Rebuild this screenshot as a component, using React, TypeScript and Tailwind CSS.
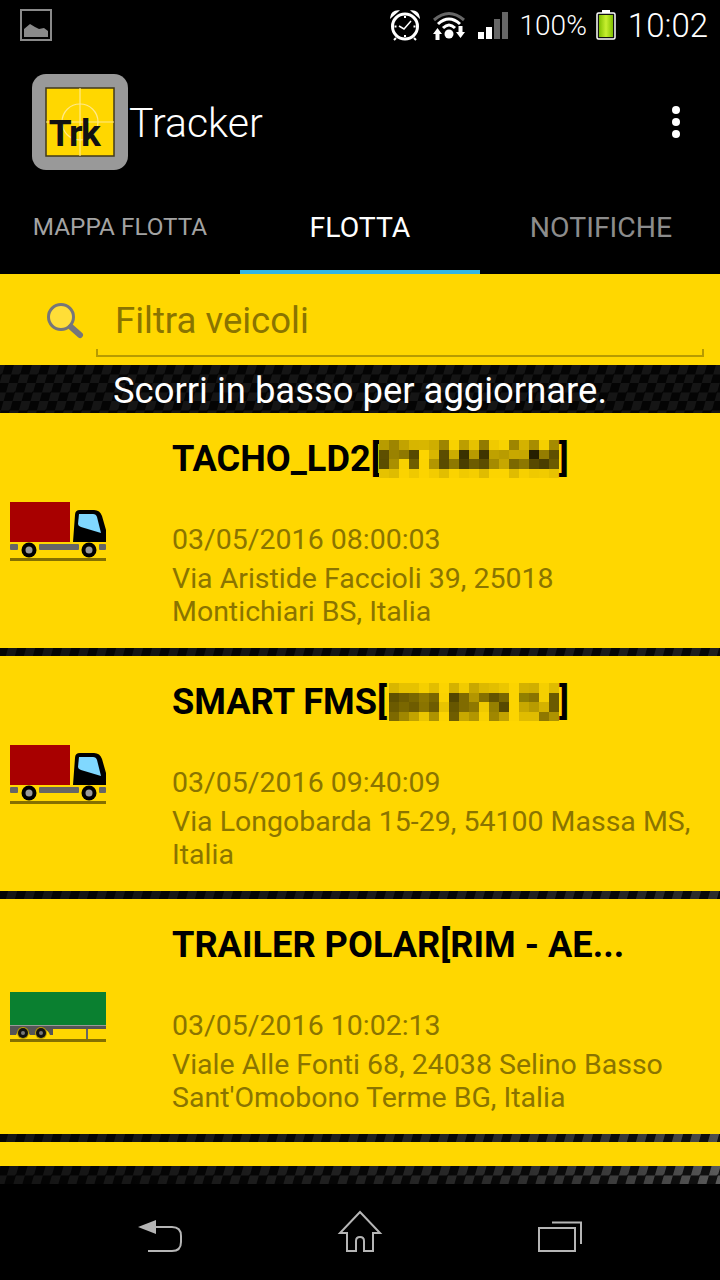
import type { ReactNode } from "react";

const ROBOTO = "font-['Roboto',sans-serif]";

const MOSAIC_A = [
  ["b89c00", "9e8500", "c2a300", "d7b500", "d8b600", "cfae00", "9e8500", "f8d200", "bc9e00", "e6c200", "927b00", "f0ca00", "f8d200", "9e8500", "d4b200", "a88d00", "f5cf00", "a58b00"],
  ["5e4f00", "9a8200", "8f7800", "574900", "fdd500", "d9b600", "5c4d00", "ccac00", "3a3100", "b89b00", "3f3500", "bfa100", "b99c00", "c8a800", "c6a700", "251f00", "957d00", "5f5000"],
  ["5b4d00", "aa8f00", "f8d100", "6f5d00", "fcd400", "b39600", "5a4c00", "8e7800", "4a3e00", "6d5c00", "5c4d00", "a58b00", "c7a700", "7b6800", "8d7700", "574900", "4a3e00", "6b5a00"],
  ["e6c200", "dfbc00", "fbd300", "efc900", "fcd400", "f3cc00", "e2be00", "fbd300", "f0ca00", "f5ce00", "e0bc00", "fcd400", "fcd400", "e0bc00", "f7d000", "efc900", "f1cb00", "e8c300"],
];

const MOSAIC_B = [
  ["d8b600", "e6c200", "e6c200", "f5cf00", "e2be00", "fcd400", "d4b200", "f1cb00", "c8a800", "dcb900", "e2be00", "ebc600", "fcd400", "d4b200", "d0af00", "f5cf00", "e0bc00"],
  ["5f5000", "6e5c00", "7a6700", "8f7800", "7a6700", "fad200", "534600", "806b00", "b39600", "857000", "645400", "7a6700", "fcd400", "918000", "8a7400", "f5cf00", "6b5a00"],
  ["6b5a00", "7a6700", "6e5c00", "8a7400", "6e5c00", "e8c300", "665600", "806b00", "8f7800", "f0ca00", "968000", "574900", "fcd400", "c8a800", "b89b00", "d4b200", "6b5a00"],
  ["7d6900", "a08700", "c2a300", "ebc600", "ae9300", "fcd400", "6f5d00", "c8a800", "b39600", "f8d100", "a08700", "c2a300", "fcd400", "e0bc00", "e0bc00", "8f7800", "ae9300"],
];

// Slanted carbon-fibre weave; `glow` brightens the weave towards the right edge.
function Carbon({ className = "", glow = "", children }: { className?: string; glow?: string; children?: ReactNode }) {
  return (
    <div className={`relative isolate shrink-0 overflow-hidden bg-black ${className}`}>
      <div className="absolute inset-y-0 -left-[20px] -right-[20px] skew-x-[-16deg] bg-[conic-gradient(#151515_25%,#040404_0_50%,#151515_0_75%,#040404_0)] bg-[length:18px_18px]" />
      {glow && <div className={`absolute inset-0 mix-blend-color-dodge ${glow}`} />}
      {children}
    </div>
  );
}

function Mosaic({ cells }: { cells: string[][] }) {
  const cols = cells[0].length;
  return (
    <svg width={cols * 10} height={38} viewBox={`0 0 ${cols * 10} 38`} className="block shrink-0" shapeRendering="crispEdges">
      {cells.flatMap((row, r) =>
        row.map((c, i) => <rect key={`${r}-${i}`} x={i * 10} y={r * 9.5} width={10} height={9.5} fill={`#${c}`} />),
      )}
    </svg>
  );
}

function Truck() {
  return (
    <svg width="96" height="60" viewBox="0 0 96 60" className="block">
      <rect x="0" y="0" width="60" height="40" fill="#a80000" />
      <path d="M63 40 L65 13 Q65 8 70 8 L84 8 Q90 8 92 14 L96 28 L96 40 Z" fill="#000" />
      <path d="M69 12 L83 12 Q86 12 87 15 L91 31 L71 25 Q68 24 68 22 Z" fill="#80d8ff" />
      <rect x="0" y="42" width="8" height="6" rx="1" fill="#666" />
      <rect x="29" y="42" width="40" height="6" rx="1" fill="#666" />
      <rect x="89" y="42" width="7" height="6" rx="1" fill="#666" />
      <circle cx="19" cy="48" r="7.5" fill="#000" />
      <circle cx="19" cy="48" r="3.5" fill="#999" />
      <circle cx="79" cy="48" r="7.5" fill="#000" />
      <circle cx="79" cy="48" r="3.5" fill="#999" />
      <rect x="0" y="56" width="96" height="3" fill="#857000" />
    </svg>
  );
}

function Trailer() {
  return (
    <svg width="96" height="50" viewBox="0 0 96 50" className="block">
      <rect x="0" y="0" width="96" height="33" fill="#0a8030" />
      <rect x="0" y="33" width="96" height="1" fill="#999" />
      <rect x="0" y="34" width="96" height="3" fill="#555" />
      <path d="M0 37 H43 V43 H40 Q38 38 35 38 H31 Q28 43 26 43 H20 Q17 38 12 38 Q8 38 6 43 H0 Z" fill="#555" />
      <circle cx="13" cy="41" r="6" fill="#b89b00" />
      <circle cx="13" cy="41" r="5" fill="#111" />
      <circle cx="13" cy="41" r="2" fill="#777" />
      <circle cx="31" cy="41" r="6" fill="#b89b00" />
      <circle cx="31" cy="41" r="5" fill="#111" />
      <circle cx="31" cy="41" r="2" fill="#777" />
      <rect x="76" y="37" width="2" height="10" fill="#666" />
      <rect x="0" y="47" width="96" height="3" fill="#857000" />
    </svg>
  );
}

function Logo() {
  return (
    <svg width="96" height="96" viewBox="0 0 96 96" className="block shrink-0">
      <rect width="96" height="96" rx="14" fill="#999" />
      <rect x="14" y="14" width="68" height="68" fill="#ffd700" stroke="#40381a" strokeWidth="1.5" />
      <circle cx="48" cy="48" r="18" fill="none" stroke="#ffe98a" strokeWidth="1.2" />
      <path d="M48 14 V82 M14 48 H82" stroke="#ffe98a" strokeWidth="1.2" />
      <text x="42" y="72" textAnchor="middle" fontFamily="Roboto, sans-serif" fontWeight="700" fontSize="37" letterSpacing="-1.5" fill="#111">
        Trk
      </text>
    </svg>
  );
}

function GalleryIcon() {
  return (
    <svg width="32" height="32" viewBox="0 0 32 32" className="block">
      <rect x="1" y="1" width="30" height="30" fill="none" stroke="#8a8a8a" strokeWidth="2" />
      <path d="M4 28 V20 L10 15 L15 18 L19 20 L24 19 L28 22 V28 Z" fill="#8a8a8a" />
    </svg>
  );
}

function AlarmIcon() {
  return (
    <svg width="32" height="32" viewBox="0 0 32 32" className="block shrink-0">
      <circle cx="16" cy="17.5" r="12.5" fill="none" stroke="#fff" strokeWidth="3" />
      <path d="M2 8 Q3 2 9 2 Z M30 8 Q29 2 23 2 Z" fill="#fff" stroke="#fff" strokeWidth="1.5" />
      <path d="M10 17 L15 20 L22 12" fill="none" stroke="#fff" strokeWidth="1.5" />
      <path d="M16 7 V9 M16 26 V28 M5.5 17.5 H7.5 M24.5 17.5 H26.5 M7 29 L5 31 M25 29 L27 31" stroke="#fff" strokeWidth="2" />
    </svg>
  );
}

function WifiIcon() {
  return (
    <svg width="32" height="30" viewBox="0 0 32 30" className="block shrink-0">
      <path d="M1 10 Q16 -3 31 10" fill="none" stroke="#666" strokeWidth="3" />
      <path d="M5 14 Q16 4 27 14" fill="none" stroke="#fff" strokeWidth="3" />
      <path d="M10 18 Q16 12 22 18" fill="none" stroke="#fff" strokeWidth="3" />
      <circle cx="16" cy="24" r="4.5" fill="#fff" />
      <path d="M0 24 L4.5 18 L9 24 H6.5 V30 H2.5 V24 Z" fill="#fff" />
      <path d="M23 22 H25.5 V16 H29.5 V22 H32 L27.5 28 Z" fill="#fff" />
    </svg>
  );
}

function SignalIcon() {
  return (
    <svg width="30" height="27" viewBox="0 0 30 27" className="block shrink-0">
      <rect x="0" y="20" width="6" height="7" fill="#fff" />
      <rect x="8" y="15" width="6" height="12" fill="#fff" />
      <rect x="16" y="7" width="6" height="20" fill="#666" />
      <rect x="24" y="0" width="6" height="27" fill="#666" />
    </svg>
  );
}

function BatteryIcon() {
  return (
    <svg width="20" height="30" viewBox="0 0 20 30" className="block shrink-0">
      <defs>
        <linearGradient id="charge" x1="0" y1="0" x2="1" y2="0">
          <stop offset="0" stopColor="#7fbf00" />
          <stop offset="0.5" stopColor="#c8f030" />
          <stop offset="1" stopColor="#7fbf00" />
        </linearGradient>
      </defs>
      <rect x="6" y="0" width="8" height="3" fill="#fff" />
      <rect x="1" y="3" width="18" height="26" rx="1.5" fill="#111" stroke="#fff" strokeWidth="1.5" />
      <rect x="3" y="5" width="14" height="22" fill="url(#charge)" />
    </svg>
  );
}

function StatusBar() {
  return (
    <div className={`flex h-[50px] shrink-0 items-center justify-between pl-[20px] pr-[12px] ${ROBOTO} font-light text-white`}>
      <GalleryIcon />
      <div className="flex items-center">
        <AlarmIcon />
        <div className="ml-[12px]"><WifiIcon /></div>
        <div className="ml-[13px]"><SignalIcon /></div>
        <span className="ml-[12px] mt-[2px] text-[28px] leading-none">100%</span>
        <div className="ml-[9px]"><BatteryIcon /></div>
        <span className="ml-[12px] mt-[1px] text-[33px] leading-none">10:02</span>
      </div>
    </div>
  );
}

function ActionBar() {
  return (
    <div className="flex h-[144px] shrink-0 items-center justify-between pl-[32px] pr-[40px]">
      <div className="flex items-center">
        <Logo />
        <span className={`ml-[1px] mt-[3px] text-[41px] leading-none text-white ${ROBOTO} font-light`}>Tracker</span>
      </div>
      <div className="flex flex-col gap-[4px]">
        <span className="h-[8px] w-[8px] rounded-full bg-white" />
        <span className="h-[8px] w-[8px] rounded-full bg-white" />
        <span className="h-[8px] w-[8px] rounded-full bg-white" />
      </div>
    </div>
  );
}

function Tabs() {
  return (
    <div className={`flex h-[80px] shrink-0 ${ROBOTO}`}>
      <div className="flex w-[240px] items-center justify-center pb-[14px] text-[24.3px] leading-none text-[#a3a3a3]">MAPPA FLOTTA</div>
      <div className="flex w-[240px] items-center justify-center border-b-4 border-[#33b5e5] pb-[8px] text-[28.4px] leading-none text-white">FLOTTA</div>
      <div className="flex w-[240px] items-center justify-center pb-[12px] pl-[2px] text-[28.4px] leading-none text-[#8c8c8c]">NOTIFICHE</div>
    </div>
  );
}

function SearchBar() {
  return (
    <div className={`flex h-[91px] shrink-0 bg-[#ffd700] ${ROBOTO}`}>
      <svg width="38" height="38" viewBox="0 0 38 38" className="ml-[46px] mt-[28px] block shrink-0">
        <circle cx="15" cy="15" r="12.5" fill="#ffe98a" fillOpacity="0.4" stroke="#76767a" strokeWidth="3" />
        <path d="M25 25 L34 33" stroke="#76767a" strokeWidth="6" strokeLinecap="round" />
      </svg>
      <div className="relative mb-[8px] ml-[12px] mr-[16px] flex flex-1 items-center border-b-2 border-[#b89b00] pl-[19px] pt-[14px] text-[36.5px] leading-none text-[#8a7400] before:absolute before:bottom-0 before:left-0 before:h-[6px] before:w-[2px] before:bg-[#b89b00] after:absolute after:bottom-0 after:right-0 after:h-[6px] after:w-[2px] after:bg-[#b89b00]">
        Filtra veicoli
      </div>
    </div>
  );
}

type Row = {
  title: string;
  mosaic?: string[][];
  mosaicGap?: string;
  date: string;
  lines: string[];
  kind: "truck" | "trailer";
  glow: string;
};

const ROWS: Row[] = [
  { title: "TACHO_LD2[", mosaic: MOSAIC_A, mosaicGap: "-ml-[2px]", date: "03/05/2016 08:00:03", lines: ["Via Aristide Faccioli 39, 25018", "Montichiari BS, Italia"], kind: "truck", glow: "bg-[linear-gradient(90deg,#000_25%,#555)]" },
  { title: "SMART FMS[", mosaic: MOSAIC_B, mosaicGap: "ml-[2px]", date: "03/05/2016 09:40:09", lines: ["Via Longobarda 15-29, 54100 Massa MS,", "Italia"], kind: "truck", glow: "bg-[linear-gradient(90deg,#000_20%,#888)]" },
  { title: "TRAILER POLAR[RIM - AE...", date: "03/05/2016 10:02:13", lines: ["Viale Alle Fonti 68, 24038 Selino Basso", "Sant'Omobono Terme BG, Italia"], kind: "trailer", glow: "bg-[linear-gradient(90deg,#000_10%,#bbb)]" },
];

function VehicleRow({ row }: { row: Row }) {
  return (
    <div className={`flex h-[235px] shrink-0 bg-[#ffd700] ${ROBOTO}`}>
      <div className={`flex w-[172px] shrink-0 items-center pl-[10px] ${row.kind === "truck" ? "pt-[2px]" : ""}`}>
        {row.kind === "truck" ? <Truck /> : <Trailer />}
      </div>
      <div className="flex min-w-0 flex-1 flex-col pt-[24px]">
        <div className="flex h-[44px] items-center text-[36.2px] font-bold leading-none text-black">
          <span className="whitespace-nowrap">{row.title}</span>
          {row.mosaic && (
            <div className={row.mosaicGap}>
              <Mosaic cells={row.mosaic} />
            </div>
          )}
          {row.mosaic && <span>]</span>}
        </div>
        <div className="mt-[42px] text-[28.5px] leading-[33px] text-[#8a7400]">{row.date}</div>
        <div className="mt-[6px] text-[28.5px] leading-[33px] text-[#8a7400]">
          {row.lines.map((l) => (
            <div key={l} className="whitespace-nowrap">{l}</div>
          ))}
        </div>
      </div>
    </div>
  );
}

function NavBar() {
  return (
    <div className="flex flex-1 items-start bg-black">
      <svg width="720" height="96" viewBox="0 0 720 96" className="block" fill="none" stroke="#b5b5b5" strokeWidth="2">
        <path d="M156 36 V50 L138 43 Z" fill="#b5b5b5" stroke="none" />
        <path d="M155 43 H172 Q181 43 181 52 V58 Q181 67 172 67 H148" />
        <path d="M360 28 L380 49 H373 V67 H364 V57 Q364 53 360 53 Q356 53 356 57 V67 H347 V49 H340 Z" />
        <rect x="539" y="44" width="36" height="23" />
        <path d="M552 38.5 H581 V60" />
      </svg>
    </div>
  );
}

export default function App() {
  return (
    <div className="flex h-[1280px] w-[720px] flex-col overflow-hidden bg-black">
      <StatusBar />
      <ActionBar />
      <Tabs />
      <SearchBar />
      <Carbon className="h-[48px]">
        <div className={`relative flex h-full items-center justify-center pt-[5px] text-[36.4px] leading-none text-white ${ROBOTO}`}>
          Scorri in basso per aggiornare.
        </div>
      </Carbon>
      {ROWS.map((r) => (
        <div key={r.title}>
          <VehicleRow row={r} />
          <Carbon className="h-[8px]" glow={r.glow} />
        </div>
      ))}
      <div className="h-[24px] shrink-0 bg-[#ffd700]" />
      <Carbon className="h-[18px]" glow="bg-[linear-gradient(90deg,#000_5%,#c4c4c4)]" />
      <NavBar />
    </div>
  );
}
